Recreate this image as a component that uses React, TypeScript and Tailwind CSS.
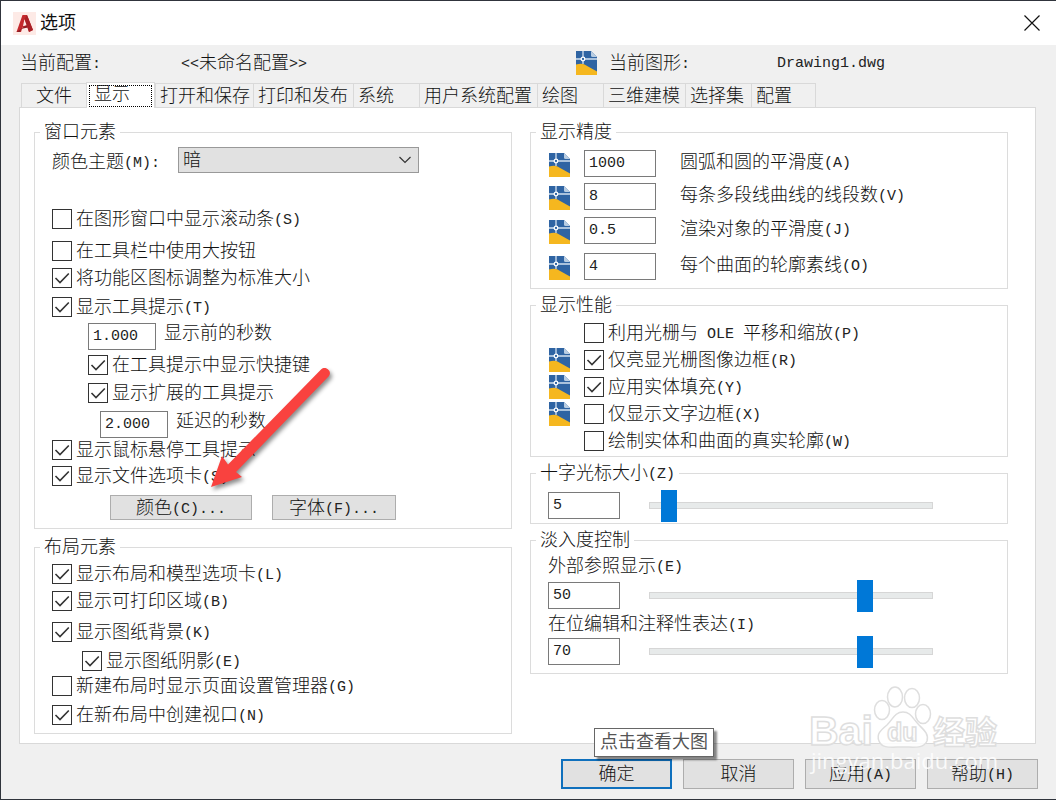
import { useId } from 'react';
import type { ReactNode } from 'react';

interface Tab {
    name: string;
    className: string;
}

const tabs: Tab[] = [
    { name: '文件', className: 'w-[65px] pl-3.5' },
    { name: '显示', className: 'w-[69px]' },
    { name: '打开和保存', className: 'w-[98px] pl-1' },
    { name: '打印和发布', className: 'w-[100px] pl-1' },
    { name: '系统', className: 'w-[66px] pl-1' },
    { name: '用户系统配置', className: 'w-[118px] pl-1' },
    { name: '绘图', className: 'w-[66px] pl-1' },
    { name: '三维建模', className: 'w-[82px] pl-1' },
    { name: '选择集', className: 'w-[66px] pl-1' },
    { name: '配置', className: 'w-[65px] pl-1 border-r' },
];

// half-width characters take half of a Chinese character
const Half = ({ children }: { children: ReactNode }) => (
    <span className="font-['Liberation_Mono',monospace] text-[15px] leading-none align-[1px] text-[#222] whitespace-pre">{children}</span>
);

const DrawingIcon = () => (
    <svg viewBox="0 0 21 24" className="w-[21px] h-6 shrink-0" aria-hidden="true">
        <path d="M0 0h15l6 6v18H0z" fill="#2f64a3" />
        <path d="M15 0l6 6h-4.500q-1.500 0-1.500-1.500z" fill="#b9cde2" />
        <path d="M0 13.500q5-1.200 8-.2L21 20.500V24H0z" fill="#f5b71f" />
        <path d="M0 8h21M7 0v13" stroke="#d3e1f0" strokeWidth="1.300" />
        <circle cx="7" cy="8" r="1.800" fill="#2f64a3" stroke="#fff" strokeWidth="1.300" />
    </svg>
);

interface GroupProps {
    title: ReactNode;
    className: string;
    children: ReactNode;
}

const Group = ({ title, className, children }: GroupProps) => (
    <fieldset className={`min-w-0 border border-[#dcdcdc] ${className}`}>
        <legend className="px-1 h-5 leading-5">{title}</legend>
        {children}
    </fieldset>
);

interface CheckProps {
    label: ReactNode;
    hotkey?: string;
    checked?: boolean;
    className?: string;
}

const Check = ({ label, hotkey, checked = false, className = '' }: CheckProps) => (
    <label className={`flex items-center gap-1 h-5 leading-5 whitespace-nowrap ${className}`}>
        <span className="grid shrink-0">
            <input
                type="checkbox"
                defaultChecked={checked}
                className="peer col-start-1 row-start-1 appearance-none size-5 border border-[#333] bg-white"
            />
            <svg
                viewBox="0 0 20 20"
                className="hidden peer-checked:block pointer-events-none col-start-1 row-start-1 size-5"
                fill="none"
                stroke="#333"
                strokeWidth="1.600"
            >
                <path d="M3.500 10l4.500 4.500L16.800 5.500" />
            </svg>
        </span>
        <span>
            {label}
            {hotkey && <Half>({hotkey})</Half>}
        </span>
    </label>
);

interface FieldProps {
    id: string;
    value: string;
    className: string;
}

const Field = ({ id, value, className }: FieldProps) => (
    <input
        id={id}
        type="text"
        defaultValue={value}
        className={`h-[27px] shrink-0 border border-[#7a7a7a] bg-white pl-1 font-['Liberation_Mono',monospace] text-[15px] text-[#222] ${className}`}
    />
);

interface NumberRowProps {
    label: string;
    hotkey?: string;
    value: string;
    className: string;
}

const PrecisionRow = ({ label, hotkey, value, className }: NumberRowProps) => {
    const id = useId();
    return (
        <div className={`flex items-end ${className}`}>
            <DrawingIcon />
            <Field id={id} value={value} className="w-[72px] ml-3.5" />
            <label htmlFor={id} className="ml-6 h-[27px] leading-6 whitespace-nowrap">
                {label}
                <Half>({hotkey})</Half>
            </label>
        </div>
    );
};

const SecondsRow = ({ label, value, className }: NumberRowProps) => {
    const id = useId();
    return (
        <div className={`flex items-start gap-2 ${className}`}>
            <Field id={id} value={value} className="w-[68px]" />
            <label htmlFor={id} className="leading-5">{label}</label>
        </div>
    );
};

interface SliderRowProps {
    id: string;
    name: string;
    value: number;
    min: number;
    max: number;
}

const SliderRow = ({ id, name, value, min, max }: SliderRowProps) => (
    <div className="flex items-center h-8 pl-[17px] pr-[74px]">
        <Field id={id} value={String(value)} className="w-[72px]" />
        <input
            type="range"
            aria-label={name}
            defaultValue={value}
            min={min}
            max={max}
            className="ml-[29px] min-w-0 flex-1 h-8 appearance-none bg-transparent [&::-webkit-slider-runnable-track]:h-[7px] [&::-webkit-slider-runnable-track]:border [&::-webkit-slider-runnable-track]:border-[#d6d6d6] [&::-webkit-slider-runnable-track]:bg-[#e7eaea] [&::-webkit-slider-thumb]:appearance-none [&::-webkit-slider-thumb]:-mt-[13px] [&::-webkit-slider-thumb]:h-8 [&::-webkit-slider-thumb]:w-4 [&::-webkit-slider-thumb]:bg-[#0078d7]"
        />
    </div>
);

const Watermark = () => (
    <svg
        viewBox="0 0 192 96"
        className="absolute right-[56px] -top-[60px] w-48 h-24 pointer-events-none"
        fill="#fff"
        fillOpacity="0.850"
        stroke="#dedede"
        strokeWidth="1.500"
    >
        <g fontFamily="Liberation Sans, Noto Sans CJK SC, sans-serif" fontWeight="700">
            <text x="1" y="61" fontSize="41">Bai</text>
            <text x="125" y="60" fontSize="32">经验</text>
            <ellipse cx="74" cy="26" rx="7.500" ry="9.500" />
            <ellipse cx="87" cy="13" rx="7.500" ry="10" />
            <ellipse cx="104" cy="14" rx="7.500" ry="9.500" />
            <ellipse cx="115" cy="30" rx="7.500" ry="9.500" />
            <path d="M95 28c-8 0-10 7-16 13-6 5-11 9-8 16 3 8 12 6 24 6s20 2 24-6c2-7-3-11-8-16-6-6-8-13-16-13z" />
            <text x="79" y="57" fontSize="25">du</text>
        </g>
        <text x="3" y="85" fontFamily="Open Sans, sans-serif" fontSize="22" fontWeight="400" stroke="none">
            jingyan.baidu.com
        </text>
    </svg>
);

const App = () => {
    const footerButton = 'w-[111px] h-[30px] bg-[#e1e1e1] leading-5 whitespace-nowrap';
    const smallButton = 'h-[25px] border border-[#adadad] bg-[#e1e1e1] leading-5 whitespace-nowrap';

    return (
        <div className="min-h-screen flex flex-col border-y border-l border-[#30343c] bg-[#f0f0f0] font-['Liberation_Sans','Noto_Sans_CJK_SC',sans-serif] font-light text-lg leading-5 text-[#111]">
            <header className="flex items-center h-11 pl-3 pr-4 bg-white">
                <svg viewBox="0 0 23 23" className="size-[23px]" aria-hidden="true">
                    <path d="M0 0h23v23H0z" fill="#fdeae6" />
                    <path d="M3.500 20L9.500 3h4.500L20 18l-4 2-1.500-4.500H9.500L8 20z" fill="#c4292d" />
                    <path d="M11.500 7l2.500 6.500-4 .5z" fill="#fdeae6" />
                    <path d="M3.500 20l10-7 1 2.500-6.500 1.500-1 3z" fill="#8e1c22" />
                    <path d="M14 3l6 15-4 2-4.500-13z" fill="#a82026" />
                </svg>
                <h1 className="ml-1 flex-1 font-normal">选项</h1>
                <button type="button" aria-label="关闭">
                    <svg viewBox="0 0 16 16" className="size-4" stroke="#111" strokeWidth="1.200">
                        <path d="M.5.5l15 15M15.500.5l-15 15" />
                    </svg>
                </button>
            </header>

            <div className="flex items-center h-9 pl-[19px] whitespace-nowrap">
                <span className="w-[161px]">当前配置<Half>:</Half></span>
                <span className="w-[395px]"><Half>{'<<'}</Half>未命名配置<Half>{'>>'}</Half></span>
                <DrawingIcon />
                <span className="ml-3 w-[168px]">当前图形<Half>:</Half></span>
                <Half>Drawing1.dwg</Half>
            </div>

            <div role="tablist" className="flex items-end h-[26px] pl-5">
                {tabs.map((tab) =>
                    tab.name === '显示' ? (
                        <button
                            key={tab.name}
                            type="button"
                            role="tab"
                            aria-selected="true"
                            className={`h-[26px] -mb-px z-10 p-0.5 border border-b-0 border-[#d9d9d9] bg-white ${tab.className}`}
                        >
                            <span className="block h-[22px] pl-1 border border-dotted border-black text-left leading-4">{tab.name}</span>
                        </button>
                    ) : (
                        <button
                            key={tab.name}
                            type="button"
                            role="tab"
                            aria-selected="false"
                            className={`h-6 border-t border-l border-[#d9d9d9] text-left whitespace-nowrap ${tab.className}`}
                        >
                            {tab.name}
                        </button>
                    ),
                )}
            </div>

            <main className="grid grid-cols-2 gap-[18px] items-start ml-[18px] mr-5 pt-3.5 pb-[9px] pl-3.5 pr-[27px] border border-[#d9d9d9] bg-white">
                <div className="relative flex flex-col gap-2">
                    <Group title="窗口元素" className="pl-[17px] pb-2 [&>legend]:-ml-3">
                        <div className="flex items-center mt-[5px]">
                            <label htmlFor="theme" className="w-[126px] pt-1">颜色主题<Half>(M):</Half></label>
                            <span className="grid items-center w-[241px]">
                                <select
                                    id="theme"
                                    className="col-start-1 row-start-1 h-[26px] pl-1 appearance-none border border-[#999] bg-[#e1e1e1]"
                                >
                                    <option>暗</option>
                                </select>
                                <svg
                                    viewBox="0 0 12 8"
                                    className="col-start-1 row-start-1 justify-self-end mr-2 w-3 h-2 pointer-events-none"
                                    fill="none"
                                    stroke="#333"
                                    strokeWidth="1.200"
                                >
                                    <path d="M.5 1L6 6.500 11.500 1" />
                                </svg>
                            </span>
                        </div>
                        <Check className="mt-9" label="在图形窗口中显示滚动条" hotkey="S" />
                        <Check className="mt-3" label="在工具栏中使用大按钮" />
                        <Check className="mt-[7px]" label="将功能区图标调整为标准大小" checked />
                        <Check className="mt-[9px]" label="显示工具提示" hotkey="T" checked />
                        <SecondsRow className="mt-1.5 ml-9" label="显示前的秒数" value="1.000" />
                        <Check className="mt-[5px] ml-9" label="在工具提示中显示快捷键" checked />
                        <Check className="mt-2 ml-9" label="显示扩展的工具提示" checked />
                        <SecondsRow className="mt-2 ml-12" label="延迟的秒数" value="2.000" />
                        <Check className="mt-0.5" label="显示鼠标悬停工具提示" checked />
                        <Check className="mt-1.5" label="显示文件选项卡" hotkey="S" checked />
                        <div className="flex gap-5 mt-[9px] ml-[58px]">
                            <button type="button" className={`w-[142px] ${smallButton}`}>颜色<Half>(C)...</Half></button>
                            <button type="button" className={`w-[124px] ${smallButton}`}>字体<Half>(F)...</Half></button>
                        </div>
                    </Group>

                    <Group title="布局元素" className="pl-[17px] pb-2 [&>legend]:-ml-3">
                        <Check className="mt-[7px]" label="显示布局和模型选项卡" hotkey="L" checked />
                        <Check className="mt-[7px]" label="显示可打印区域" hotkey="B" checked />
                        <Check className="mt-[11px]" label="显示图纸背景" hotkey="K" checked />
                        <Check className="mt-[9px] ml-[30px]" label="显示图纸阴影" hotkey="E" checked />
                        <Check className="mt-[5px]" label="新建布局时显示页面设置管理器" hotkey="G" />
                        <Check className="mt-[9px]" label="在新布局中创建视口" hotkey="N" checked />
                    </Group>

                    {/* pointer to the colour button */}
                    <svg
                        viewBox="0 0 136 136"
                        className="absolute left-[170px] top-[238px] size-[136px] pointer-events-none drop-shadow-[2px_3px_2px_rgba(0,0,0,0.45)]"
                        fill="#f9423f"
                    >
                        <path d="M7 127L18 96l6 8.500L117 9.500a5.200 5.200 0 0 1 8 6.500L32 112l6 5z" />
                    </svg>
                </div>

                <div className="flex flex-col gap-1.5">
                    <Group title="显示精度" className="pl-[18px] pb-2 [&>legend]:-ml-[13px]">
                        <PrecisionRow className="mt-2" label="圆弧和圆的平滑度" hotkey="A" value="1000" />
                        <PrecisionRow className="mt-1.5" label="每条多段线曲线的线段数" hotkey="V" value="8" />
                        <PrecisionRow className="mt-[7px]" label="渲染对象的平滑度" hotkey="J" value="0.5" />
                        <PrecisionRow className="mt-[9px]" label="每个曲面的轮廓素线" hotkey="O" value="4" />
                    </Group>

                    <Group title="显示性能" className="pl-[18px] pb-0.5 [&>legend]:-ml-[13px]">
                        <div className="flex items-center h-[27px] mt-1 pl-[35px]">
                            <Check label={<>利用光栅与<Half>{' OLE '}</Half>平移和缩放</>} hotkey="P" />
                        </div>
                        <div className="flex items-center gap-3.5 h-[27px]">
                            <DrawingIcon />
                            <Check label="仅亮显光栅图像边框" hotkey="R" checked />
                        </div>
                        <div className="flex items-center gap-3.5 h-[27px]">
                            <DrawingIcon />
                            <Check label="应用实体填充" hotkey="Y" checked />
                        </div>
                        <div className="flex items-center gap-3.5 h-[27px]">
                            <DrawingIcon />
                            <Check label="仅显示文字边框" hotkey="X" />
                        </div>
                        <div className="flex items-center h-[27px] pl-[35px]">
                            <Check label="绘制实体和曲面的真实轮廓" hotkey="W" />
                        </div>
                    </Group>

                    <Group title={<label htmlFor="cursor">十字光标大小<Half>(Z)</Half></label>} className="pt-1.5 pb-0.5 [&>legend]:ml-[5px]">
                        <SliderRow id="cursor" name="十字光标大小" value={5} min={1} max={100} />
                    </Group>

                    <Group title="淡入度控制" className="pt-1.5 pb-1.5 [&>legend]:ml-[5px]">
                        <label htmlFor="xref" className="block pl-[17px] mb-[3px]">外部参照显示<Half>(E)</Half></label>
                        <SliderRow id="xref" name="外部参照显示" value={50} min={-90} max={90} />
                        <label htmlFor="inplace" className="block pl-[17px] mt-[3px] mb-px">在位编辑和注释性表达<Half>(I)</Half></label>
                        <SliderRow id="inplace" name="在位编辑和注释性表达" value={70} min={0} max={90} />
                    </Group>
                </div>
            </main>

            <footer className="relative flex justify-end gap-[11px] pt-[15px] pr-[18px] pb-[9px]">
                <button type="button" className={`border-2 border-[#0f70bd] ${footerButton}`}>确定</button>
                <button type="button" className={`border border-[#adadad] ${footerButton}`}>取消</button>
                <button type="button" className={`border border-[#adadad] ${footerButton}`}>应用<Half>(A)</Half></button>
                <button type="button" className={`border border-[#adadad] ${footerButton}`}>帮助<Half>(H)</Half></button>
                <div
                    role="tooltip"
                    className="absolute right-[342px] -top-4 px-[5px] h-[29px] leading-[27px] border border-[#666] bg-white font-normal text-[#555] whitespace-nowrap shadow-[3px_3px_2px_rgba(0,0,0,0.45)]"
                >
                    点击查看大图
                </div>
                <Watermark />
            </footer>
        </div>
    );
};

export default App;
